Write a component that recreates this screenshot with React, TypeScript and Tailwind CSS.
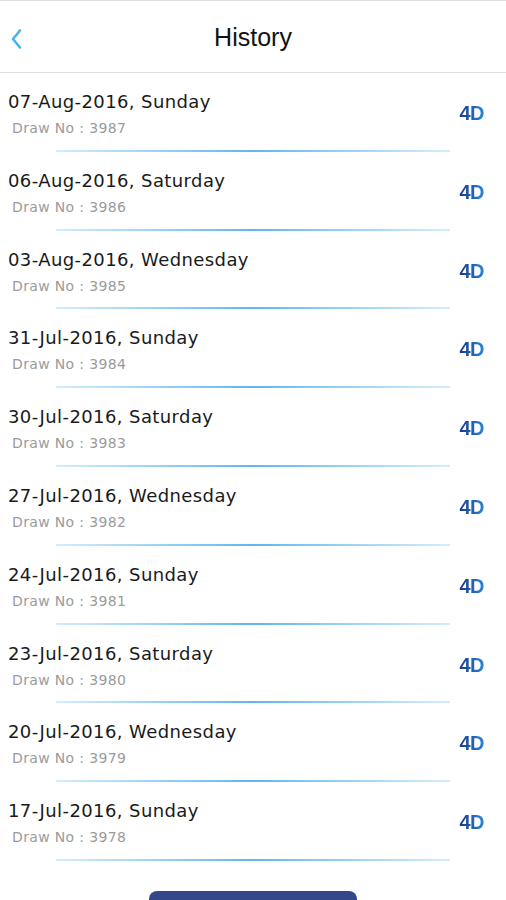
import React from "react";

const draws = [
  { date: "07-Aug-2016, Sunday", no: 3987 },
  { date: "06-Aug-2016, Saturday", no: 3986 },
  { date: "03-Aug-2016, Wednesday", no: 3985 },
  { date: "31-Jul-2016, Sunday", no: 3984 },
  { date: "30-Jul-2016, Saturday", no: 3983 },
  { date: "27-Jul-2016, Wednesday", no: 3982 },
  { date: "24-Jul-2016, Sunday", no: 3981 },
  { date: "23-Jul-2016, Saturday", no: 3980 },
  { date: "20-Jul-2016, Wednesday", no: 3979 },
  { date: "17-Jul-2016, Sunday", no: 3978 },
];

const HistoryRow = ({ date, no }: { date: string; no: number }) => (
  <div className="h-[78.8px] flex flex-col">
    <div className="flex-1 flex items-start pl-2 pr-[22px] pt-[17px]">
      <div className="flex-1 flex flex-col gap-[4px]">
        <div className="text-[18px] leading-6 tracking-[0.4px] text-[#1a1a1a] font-['DejaVu_Sans',sans-serif]">{date}</div>
        <div className="pl-1 text-[14px] leading-5 tracking-[0.35px] text-[#9b9b9b] font-['DejaVu_Sans',sans-serif]">
          Draw No : {no}
        </div>
      </div>
      <div className="mt-[11px] text-[20px] leading-6 font-bold tracking-tight bg-gradient-to-r from-[#17378a] to-[#2b86d9] bg-clip-text text-transparent font-['Liberation_Sans',Arial,sans-serif]">
        4D
      </div>
    </div>
    <div className="mx-[56px] h-[2px] bg-gradient-to-r from-[#d3edfc] via-[#5db7ef] to-[#d3edfc]" />
  </div>
);

export default function App() {
  return (
    <div className="w-[506px] h-[900px] overflow-hidden bg-white font-['Liberation_Sans',Arial,sans-serif]">
      <div className="h-[73px] border-t border-b border-[#dedede] flex items-center relative">
        <button className="absolute left-[6px] top-[23px] p-1">
          <svg width="12" height="22" viewBox="0 0 12 22" fill="none">
            <path d="M10 2.5 L3 11 L10 19.5" stroke="#4cb2ee" strokeWidth="2.6" strokeLinecap="round" strokeLinejoin="round" />
          </svg>
        </button>
        <div className="flex-1 text-center text-[25px] text-[#111] pt-[3px]">History</div>
      </div>
      <div>
        {draws.map((d) => (
          <HistoryRow key={d.no} date={d.date} no={d.no} />
        ))}
      </div>
      <div className="flex justify-center pt-[30px]">
        <div className="w-[208px] h-[40px] rounded-lg bg-[#34478a]" />
      </div>
    </div>
  );
}
